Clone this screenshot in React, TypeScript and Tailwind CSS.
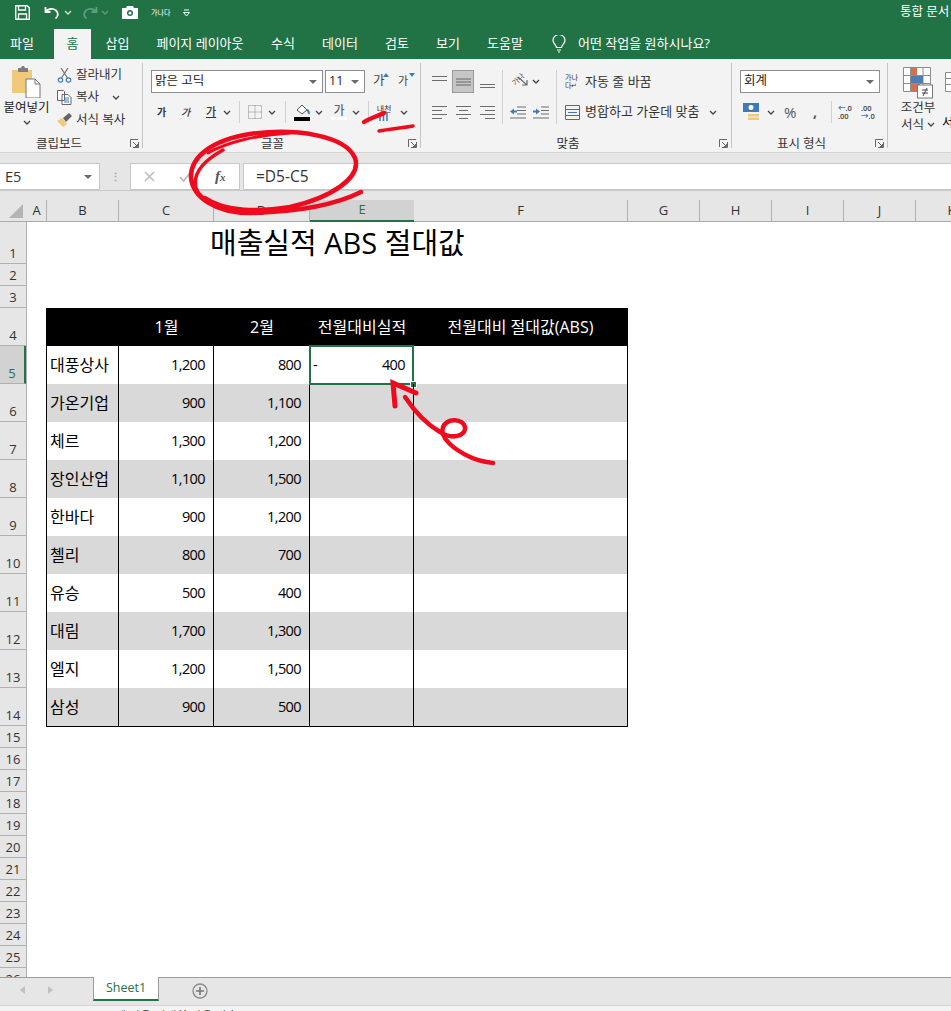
import React from "react";

const Chev = ({ c = "#444" }: { c?: string }) => (
  <svg width="8" height="5" viewBox="0 0 8 5" className="shrink-0"><path d="M1 1l3 3 3-3" fill="none" stroke={c} strokeWidth="1.3" /></svg>
);
const Caret = () => <svg width="8" height="4" viewBox="0 0 8 4" className="shrink-0"><path d="M0 0h8L4 4z" fill="#6a6a6a" /></svg>;
const Sep = () => <div className="h-[22px] w-px bg-[#d0d0d0] shrink-0" />;
const Launcher = () => (
  <svg width="9" height="9" viewBox="0 0 9 9" className="absolute right-[3px] top-[2px]"><path d="M.5 8V.5H8M8.500 3v5.500H3M3 3l4.500 4.500M7.500 5v2.500H5" fill="none" stroke="#666" strokeWidth="1" /></svg>
);
const Lines = ({ rows, w = 15 }: { rows: [number, number][]; w?: number }) => (
  <svg width={w} height="14" viewBox={`0 0 ${w} 14`} className="shrink-0">
    {rows.map(([x, l], i) => <rect key={i} x={x} y={1 + i * 4} width={l} height="1" fill="#6d6d6d" />)}
  </svg>
);

const Group = ({ w, label, labelPad, children }: { w: string; label?: string; labelPad: string; children: React.ReactNode }) => (
  <div className={`${w} shrink-0 flex flex-col h-[85px] relative border-r border-[#c6c6c6]`}>
    <div className="h-[74px] flex-none">{children}</div>
    <div className={`relative h-[11px] text-[12.5px] leading-[13px] text-center text-[#333] ${labelPad}`}>
      {label}
      <Launcher />
    </div>
  </div>
);

const Combo = ({ w, text, cls = "" }: { w: string; text: string; cls?: string }) => (
  <div className={`${w} h-[23px] bg-white border border-[#8f8f8f] flex items-center justify-between pl-[3px] pr-[5px] text-[12.5px] text-[#222] shrink-0 ${cls}`}>
    <span>{text}</span><Caret />
  </div>
);

const rowH = [42, 22, 22, 38, 38, 38, 38, 38, 38, 38, 38, 38, 38, 38, ...Array(12).fill(22)] as number[];
const columns: [string, string][] = [
  ["A", "w-[20px]"], ["B", "w-[72px]"], ["C", "w-[95px]"], ["D", "w-[96px]"], ["E", "w-[104px]"], ["F", "w-[214px]"],
  ["G", "w-[72px]"], ["H", "w-[72px]"], ["I", "w-[72px]"], ["J", "w-[72px]"], ["K", "w-[72px]"],
];
const data: [string, string, string][] = [
  ["대풍상사", "1,200", "800"], ["가온기업", "900", "1,100"], ["체르", "1,300", "1,200"], ["장인산업", "1,100", "1,500"],
  ["한바다", "900", "1,200"], ["첼리", "800", "700"], ["유승", "500", "400"], ["대림", "1,700", "1,300"],
  ["엘지", "1,200", "1,500"], ["삼성", "900", "500"],
];

export default function App() {
  return (
    <div className="relative w-[951px] h-[1011px] overflow-hidden flex flex-col bg-[#e6e6e6] [font-family:'Open_Sans','Noto_Sans_CJK_KR',sans-serif]">
      {/* title bar */}
      <div className="h-[29px] bg-[#217346] flex items-center pb-[4px] pl-[15px] text-white shrink-0">
        <svg width="15" height="15" viewBox="0 0 15 15"><path d="M.7.7h11.500l2.100 2.100v11.500H.7z" fill="none" stroke="#fff" strokeWidth="1.4" /><path d="M3.500 1v4h7V1M3.500 14V9h8v5" fill="none" stroke="#fff" strokeWidth="1.3" /></svg>
        <svg width="16" height="14" viewBox="0 0 16 14" className="ml-[14px]"><path d="M1.500 1v5h5M1.500 6C4 2.500 9 2 12 4.500s2 6.500-.5 8" fill="none" stroke="#fff" strokeWidth="1.800" /></svg>
        <div className="ml-[4px]"><Chev c="#cfe3d8" /></div>
        <svg width="16" height="14" viewBox="0 0 16 14" className="ml-[10px]"><path d="M14.500 1v5h-5M14.500 6C12 2.500 7 2 4 4.500s-2 6.500.5 8" fill="none" stroke="#5f9d7e" strokeWidth="1.800" /></svg>
        <div className="ml-[3px]"><Chev c="#5f9d7e" /></div>
        <svg width="16" height="13" viewBox="0 0 16 13" className="ml-[13px]"><path d="M0 2h4l1-2h6l1 2h4v11H0z" fill="#fff" /><circle cx="8" cy="7" r="3" fill="#217346" /><circle cx="8" cy="7" r="1.500" fill="#fff" /></svg>
        <span className="ml-[13px] w-[17px] text-[7px] leading-none whitespace-nowrap">가나다</span>
        <svg width="7" height="8" viewBox="0 0 7 8" className="ml-[15px]"><path d="M1 1h5M0.500 3.500h6L3.500 7z" fill="none" stroke="#fff" strokeWidth="1" /></svg>
        <span className="ml-auto text-[12.5px] whitespace-nowrap w-[51px] overflow-hidden">통합 문서</span>
      </div>
      {/* tabs */}
      <div className="h-[30px] bg-[#217346] flex text-white text-[13px] shrink-0">
        <div className="w-[54px] flex items-center justify-center pr-[10px]">파일</div>
        <div className="w-[37px] bg-[#f3f3f3] text-[#217346] flex items-center justify-center">홈</div>
        <div className="w-[53px] flex items-center justify-center">삽입</div>
        <div className="w-[112px] flex items-center justify-center whitespace-nowrap">페이지 레이아웃</div>
        <div className="w-[54px] flex items-center justify-center">수식</div>
        <div className="w-[60px] flex items-center justify-center">데이터</div>
        <div className="w-[54px] flex items-center justify-center">검토</div>
        <div className="w-[48px] flex items-center justify-center">보기</div>
        <div className="w-[66px] flex items-center justify-center">도움말</div>
        <div className="flex items-center ml-[14px]">
          <svg width="14" height="18" viewBox="0 0 14 18"><path d="M4.500 12.500C4 9.500 1 8.500 1 5.500a6 6 0 0 1 12 0c0 3-3 4-3.500 7zM5 15h4M6 17h2" fill="none" stroke="#fff" strokeWidth="1.200" /></svg>
          <span className="ml-[12px] whitespace-nowrap">어떤 작업을 원하시나요?</span>
        </div>
      </div>
      {/* ribbon */}
      <div className="h-[93px] bg-[#f3f3f3] flex pt-[4px] shrink-0 overflow-hidden">
        <Group w="w-[143px]" label="클립보드" labelPad="pr-[24px]">
          <div className="flex">
            <div className="w-[53px] flex flex-col items-center pt-[3px]">
              <svg width="29" height="32" viewBox="0 0 29 32"><path d="M0 4h20v23H0z" fill="#f0c97a" /><path d="M6 4V2h3l1-2h2l1 2h3v4H6z" fill="#7d7d7d" /><path d="M14 13h9l5 5v14H14z" fill="#fff" stroke="#777" /><path d="M23 13v5h5" fill="none" stroke="#777" /></svg>
              <span className="text-[12.5px] leading-[15px] mt-[2px] whitespace-nowrap text-[#222]">붙여넣기</span>
              <div className="mt-[5px]"><Chev /></div>
            </div>
            <div className="flex flex-col pl-[4px] pt-px text-[12.5px] text-[#333] whitespace-nowrap">
              <div className="h-[22px] flex items-center gap-[4px]">
                <svg width="15" height="15" viewBox="0 0 15 15"><circle cx="3.500" cy="12" r="2.200" fill="none" stroke="#3f7ab8" strokeWidth="1.200" /><circle cx="11.500" cy="12" r="2.200" fill="none" stroke="#3f7ab8" strokeWidth="1.200" /><path d="M4.500 10L11 0M10.500 10L4 0" stroke="#777" strokeWidth="1.300" /></svg>
                잘라내기
              </div>
              <div className="h-[23px] flex items-center gap-[4px]">
                <svg width="15" height="15" viewBox="0 0 15 15"><path d="M.5.500h6l1 1v9H.5z M5 4.500h6l3 3v7H5z" fill="#fff" stroke="#666" /><path d="M7 8h5M7 10h5M7 12h5" stroke="#3f7ab8" /></svg>
                복사
                <div className="ml-[9px]"><Chev /></div>
              </div>
              <div className="h-[22px] flex items-center gap-[4px]">
                <svg width="15" height="14" viewBox="0 0 15 14"><path d="M0 8l5-3 5 6-4 3z" fill="#f0c97a" /><path d="M6 5l6-5 3 3-6 6z" fill="#666" /></svg>
                서식 복사
              </div>
            </div>
          </div>
        </Group>
        <Group w="w-[278px]" label="글꼴" labelPad="pr-[18px]">
          <div className="flex flex-col pl-[8px] pt-[7px]">
            <div className="flex items-center">
              <Combo w="w-[172px]" text="맑은 고딕" />
              <Combo w="w-[40px]" text="11" cls="ml-[2px]" />
              <span className="ml-[8px] w-[14px] text-[12.5px] text-[#444]">가</span>
              <svg width="6" height="4" viewBox="0 0 6 4" className="self-start -ml-[4px] mt-[3px]"><path d="M3 0l3 4H0z" fill="#3f7ab8" /></svg>
              <span className="ml-[9px] w-[14px] text-[11px] text-[#444]">가</span>
              <svg width="6" height="4" viewBox="0 0 6 4" className="self-start -ml-[3px] mt-[3px]"><path d="M0 0h6L3 4z" fill="#3f7ab8" /></svg>
            </div>
            <div className="flex items-center mt-[7px] h-[24px] text-[10px] text-[#333]">
              <span className="ml-[6px] w-[24px] font-semibold">가</span>
              <span className="w-[25px] italic font-medium">가</span>
              <span className="w-[17px] underline font-medium text-[11px]">가</span>
              <Chev />
              <div className="ml-[8px]"><Sep /></div>
              <svg width="14" height="14" viewBox="0 0 14 14" className="ml-[8px]"><path d="M.5.500h13v13H.5zM7 .5v13M.5 7h13" fill="none" stroke="#888" strokeDasharray="1 1" /></svg>
              <div className="ml-[6px]"><Chev /></div>
              <div className="ml-[9px]"><Sep /></div>
              <svg width="16" height="18" viewBox="0 0 16 18" className="ml-[8px]"><path d="M3 7l5-5 5 5-5 4z" fill="#fff" stroke="#555" /><path d="M13 7c2 1 2 3 1.500 4" stroke="#3f7ab8" strokeWidth="2" fill="none" /><rect y="14" width="16" height="4" fill="#000" /></svg>
              <div className="ml-[5px]"><Chev /></div>
              <div className="ml-[8px] w-[16px] flex flex-col items-center">
                <span className="text-[12px] leading-[13px] text-[#444]">가</span>
                <div className="h-[3px] w-[16px] bg-white" />
              </div>
              <div className="ml-[5px]"><Chev /></div>
              <div className="ml-[8px]"><Sep /></div>
              <div className="ml-[7px] w-[16px] flex flex-col items-center">
                <span className="text-[8px] leading-[9px] whitespace-nowrap">내천</span>
                <svg width="10" height="8" viewBox="0 0 10 8"><path d="M1 3v5M4.500 1v7M8 0v8" stroke="#3f7ab8" strokeWidth="1.500" /></svg>
              </div>
              <div className="ml-[8px]"><Chev /></div>
            </div>
          </div>
        </Group>
        <Group w="w-[311px]" label="맞춤" labelPad="pr-[16px]">
          <div className="flex pt-[7px]">
            <div className="flex flex-col pl-[11px]">
              <div className="flex items-center h-[23px]">
                <Lines rows={[[0, 15], [0, 15], [20, 0]]} />
                <div className="ml-[5px] w-[22px] h-[23px] bg-[#c6c6c6] border border-[#9a9a9a] flex items-center justify-center">
                  <svg width="15" height="8" viewBox="0 0 15 8"><path d="M0 1h15M0 4h15M0 7h15" stroke="#666" /></svg>
                </div>
                <svg width="15" height="14" viewBox="0 0 15 14" className="ml-[6px]"><path d="M0 9.500h15M0 12.500h15" stroke="#6d6d6d" /></svg>
              </div>
              <div className="flex items-center h-[24px] mt-[7px] gap-[9px]">
                <Lines rows={[[0, 15], [0, 10], [0, 15], [0, 10]]} />
                <Lines rows={[[0, 15], [3, 9], [0, 15], [3, 9]]} />
                <Lines rows={[[0, 15], [5, 10], [0, 15], [5, 10]]} />
              </div>
            </div>
            <div className="ml-[7px] w-[55px] flex flex-col border-r border-[#d0d0d0] border-l h-[54px] pl-[7px]">
              <div className="flex items-center h-[23px]">
                <div className="w-[20px] h-[20px] relative overflow-hidden">
                  <span className="absolute left-[1px] top-[3px] text-[7.5px] leading-[8px] whitespace-nowrap text-[#555] -rotate-45">가나</span>
                  <svg width="20" height="20" viewBox="0 0 20 20" className="absolute left-0 top-0"><path d="M8 5l9 8M17 8v5h-5" fill="none" stroke="#666" strokeWidth="1.200" /></svg>
                </div>
                <div className="ml-[2px]"><Chev /></div>
              </div>
              <div className="flex items-center h-[24px] mt-[7px] gap-[7px]">
                <svg width="16" height="13" viewBox="0 0 16 13"><path d="M7 1h9M7 4.500h9M7 8h9M0 12h16" stroke="#6d6d6d" /><path d="M0 5.500L4 2.500v2h3v2H4v2z" fill="#3f7ab8" /></svg>
                <svg width="16" height="13" viewBox="0 0 16 13" className="-mr-[4px]"><path d="M8 1h8M8 4.500h8M8 8h8M0 12h16" stroke="#6d6d6d" /><path d="M7 5.500L3 2.500v2H0v2h3v2z" fill="#3f7ab8" /></svg>
              </div>
            </div>
            <div className="flex flex-col pl-[8px] text-[13px] text-[#333] whitespace-nowrap">
              <div className="flex items-center h-[23px]">
                <span className="w-[15px] text-[7px] leading-[8px] mr-[5px]">가나<br />다↵</span>
                자동 줄 바꿈
              </div>
              <div className="flex items-center h-[24px] mt-[7px]">
                <svg width="15" height="15" viewBox="0 0 15 15" className="mr-[5px]"><path d="M.5.500h14v14H.5zM.5 4.500h14M.5 10.500h14" fill="none" stroke="#666" /><path d="M3 7.500h9" stroke="#3f7ab8" /></svg>
                병합하고 가운데 맞춤
                <div className="ml-[10px]"><Chev /></div>
              </div>
            </div>
          </div>
        </Group>
        <Group w="w-[156px]" label="표시 형식" labelPad="pr-[16px]">
          <div className="flex flex-col pl-[8px] pt-[7px]">
            <Combo w="w-[140px]" text="회계" />
            <div className="flex items-center h-[24px] mt-[7px] text-[#555]">
              <svg width="18" height="18" viewBox="0 0 18 18" className="ml-[3px]"><rect width="16" height="9" fill="#3f7ab8" /><circle cx="8" cy="4.500" r="2.500" fill="#fff" /><rect x="5" y="11" width="11" height="2.500" fill="#f0c97a" /><rect x="5" y="14.500" width="11" height="2.500" fill="#f0c97a" /></svg>
              <div className="ml-[6px]"><Chev /></div>
              <span className="ml-[9px] text-[15px] leading-none w-[29px]">%</span>
              <span className="text-[14px] font-bold leading-none w-[18px]">,</span>
              <Sep />
              <div className="ml-[6px] w-[16px] flex flex-col text-[7.5px] leading-[8px] font-semibold text-[#444]">
                <span className="whitespace-nowrap"><span className="text-[#3f7ab8]">←</span>.0</span><span className="whitespace-nowrap">.00</span>
              </div>
              <div className="ml-[7px] w-[16px] flex flex-col text-[7.5px] leading-[8px] font-semibold text-[#444]">
                <span className="whitespace-nowrap">.00</span><span className="whitespace-nowrap"><span className="text-[#3f7ab8]">→</span>.0</span>
              </div>
            </div>
          </div>
        </Group>
        <div className="flex pl-[11px] pt-[4px]">
          <div className="w-[38px] flex flex-col items-center">
            <svg width="30" height="38" viewBox="0 0 30 38">
              <path d="M.5.500h27v24H.5zM.5 8.500h27M.5 16.500h27M7.500.5v24M20 .5v24" fill="#fff" stroke="#8c8c8c" />
              <rect x="8" y="1" width="6" height="7" fill="#dd6b4d" /><rect x="8" y="9" width="12" height="7" fill="#4a7ebb" /><rect x="8" y="17" width="9" height="7" fill="#dd6b4d" />
              <rect x="14.500" y="18" width="15" height="13" fill="#fff" stroke="#777" /><path d="M19 23h6M19 26h6M24 21l-4 8" stroke="#444" fill="none" />
            </svg>
            <span className="text-[12.5px] leading-[16px] -mt-[5px] whitespace-nowrap text-[#333]">조건부</span>
            <span className="text-[12.5px] leading-[17px] whitespace-nowrap text-[#333] flex items-center gap-[3px]">서식 <Chev /></span>
          </div>
          <div className="ml-[5px] flex flex-col">
            <svg width="20" height="26" viewBox="0 0 20 26" className="ml-[3px]"><path d="M.5 5.500h19v19H.5zM.5 11.500h19M.5 17.500h19M8 5.500v19" fill="#fff" stroke="#8c8c8c" /></svg>
            <span className="text-[12.5px] leading-[17px] mt-[21px] whitespace-nowrap">서식</span>
          </div>
        </div>
      </div>
      {/* strip + formula bar */}
      <div className="h-[11px] bg-[#e6e6e6] border-t border-[#d4d4d4] shrink-0" />
      <div className="h-[28px] flex shrink-0 border-b border-[#c8c8c8] bg-[#e6e6e6]">
        <div className="w-[100px] bg-white border border-l-0 border-[#c8c8c8] flex items-center justify-between pl-[5px] pr-[7px] text-[14.5px] text-[#333]">E5<Caret /></div>
        <div className="w-[30px] flex items-center justify-center text-[#aaa] text-[11px] leading-[5px] font-bold">⋮</div>
        <div className="w-[110px] bg-white border border-[#c8c8c8] flex items-center text-[#bdbdbd]">
          <svg width="11" height="11" viewBox="0 0 11 11" className="ml-[13px]"><path d="M1 1l9 9M10 1l-9 9" stroke="#bdbdbd" strokeWidth="1.600" /></svg>
          <svg width="12" height="10" viewBox="0 0 12 10" className="ml-[24px]"><path d="M1 5l3.500 4L11 1" fill="none" stroke="#bdbdbd" strokeWidth="1.800" /></svg>
          <span className="ml-[24px] text-[15px] font-bold italic [font-family:'Liberation_Serif',serif] text-[#555]">f<span className="text-[11px]">x</span></span>
        </div>
        <div className="flex-1 ml-[3px] bg-white border border-r-0 border-[#c8c8c8] flex items-center pl-[12px] text-[15.5px] text-[#333]">=D5-C5</div>
      </div>
      {/* column headers */}
      <div className="h-[31px] flex items-end shrink-0 border-b border-[#ababab] bg-[#e6e6e6]">
        <div className="w-[27px] h-[21px] relative shrink-0">
          <svg width="14" height="14" viewBox="0 0 14 14" className="absolute left-[9px] top-[4px]"><path d="M14 0v14H0z" fill="#b5b5b5" /></svg>
        </div>
        {columns.map(([c, w]) => (
          <div key={c} className={`${w} h-[21px] shrink-0 flex items-center justify-center text-[13px] text-[#333] ${c === "E" ? "bg-[#d2d2d2] border-b-2 border-[#217346] text-[#217346] h-[22px] -mb-px" : "border-r border-[#b1b1b1]"}`}>{c}</div>
        ))}
      </div>
      {/* sheet */}
      <div className="flex-1 min-h-0 flex overflow-hidden">
        <div className="w-[27px] shrink-0 border-r border-[#b1b1b1]">
          {rowH.map((h, i) => (
            <div key={i} style={{ height: h }} className={`flex items-end justify-center pb-[1px] text-[13px] leading-[18px] text-[#333] border-b border-[#b1b1b1] ${i === 4 ? "bg-[#d2d2d2] border-r-2 border-r-[#217346] text-[#217346]" : ""}`}>{i + 1}</div>
          ))}
        </div>
        <div className="flex-1 bg-white relative">
          <div className="h-[42px] pl-[183px] pb-[2px] flex items-center text-[29px] leading-none text-black whitespace-nowrap">매출실적 ABS 절대값</div>
          <div className="h-[44px]" />
          <div className="ml-[19px] w-[582px] border-l border-r border-b border-black text-[16px] text-black">
            <div className="grid grid-cols-[72px_95px_96px_104px_213px] h-[38px] bg-black text-white">
              <div />
              <div className="flex items-center justify-center">1월</div>
              <div className="flex items-center justify-center">2월</div>
              <div className="flex items-center justify-center">전월대비실적</div>
              <div className="flex items-center justify-center">전월대비 절대값(ABS)</div>
            </div>
            {data.map(([n, a, b], i) => (
              <div key={n} className={`grid grid-cols-[72px_95px_96px_104px_213px] h-[38px] ${i % 2 ? "bg-[#d9d9d9]" : "bg-white"}`}>
                <div className="border-r border-black flex items-center pl-[3px]">{n}</div>
                <div className="border-r border-black flex items-center justify-end pr-[8px] text-[14.5px] tracking-[-0.6px]">{a}</div>
                <div className="border-r border-black flex items-center justify-end pr-[8px] text-[14.5px] tracking-[-0.6px]">{b}</div>
                <div className={`border-r border-black flex items-center text-[14.5px] tracking-[-0.6px] relative ${i === 0 ? "justify-between pl-[3px] pr-[8px]" : ""}`}>
                  {i === 0 && (
                    <>
                      <span>-</span><span>400</span>
                      <div className="absolute -left-px -top-px right-[-1px] bottom-[-1px] border-2 border-[#217346]" />
                      <div className="absolute right-[-4px] bottom-[-4px] w-[7px] h-[7px] bg-[#217346] border border-white" />
                    </>
                  )}
                </div>
                <div />
              </div>
            ))}
          </div>
        </div>
      </div>
      {/* sheet tabs */}
      <div className="h-[28px] shrink-0 flex border-t border-[#9c9c9c] bg-[#e6e6e6]">
        <div className="w-[93px] flex items-center pl-[20px] gap-[23px] pb-[3px]">
          <svg width="5" height="8" viewBox="0 0 5 8"><path d="M5 0v8L0 4z" fill="#c0c0c0" /></svg>
          <svg width="5" height="8" viewBox="0 0 5 8"><path d="M0 0v8l5-4z" fill="#c0c0c0" /></svg>
        </div>
        <div className="w-[66px] h-[24px] -mt-px bg-white border-x border-[#9c9c9c] border-b-2 border-b-[#217346] flex items-center justify-center text-[12.5px] text-[#217346]">Sheet1</div>
        <svg width="16" height="16" viewBox="0 0 16 16" className="ml-[33px] mt-[5px]"><circle cx="8" cy="8" r="7" fill="none" stroke="#8a8a8a" strokeWidth="1.300" /><path d="M8 4v8M4 8h8" stroke="#777" strokeWidth="1.600" /></svg>
      </div>
      {/* status bar */}
      <div className="h-[6px] shrink-0 bg-[#f3f3f3] border-t border-[#d4d4d4] overflow-hidden pl-[115px] text-[12px] leading-[22px] text-[#333] whitespace-nowrap">에 값을 선택한 다음 맞춤</div>

      {/* red hand-drawn annotations */}
      <svg width="951" height="1011" viewBox="0 0 951 1011" className="absolute left-0 top-0 pointer-events-none" fill="none" stroke="#f00a1e" strokeLinecap="round">
        <path d="M361 192C335 205 295 212 250 213C215 213 193 197 191 178C190 157 212 140 250 134C295 128 345 135 355 158C362 178 330 198 290 207C260 212 225 212 205 198" strokeWidth="4.500" />
        <path d="M223 150C205 160 192 172 196 188C200 202 225 210 260 211" strokeWidth="3.500" />
        <path d="M208 153C225 143 255 135 290 133" strokeWidth="3" />
        <path d="M364 122C370 118 378 116 384 113" strokeWidth="4.500" />
        <path d="M379 131C390 129 402 128 413 126" strokeWidth="3.500" />
        <path d="M395 406L393 383L416 393" strokeWidth="5" />
        <path d="M405 397C415 412 428 425 440 432C452 440 466 436 465 427C463 419 448 417 443 427C439 438 455 450 470 457C478 461 486 462 493 463" strokeWidth="4.500" />
      </svg>
    </div>
  );
}
